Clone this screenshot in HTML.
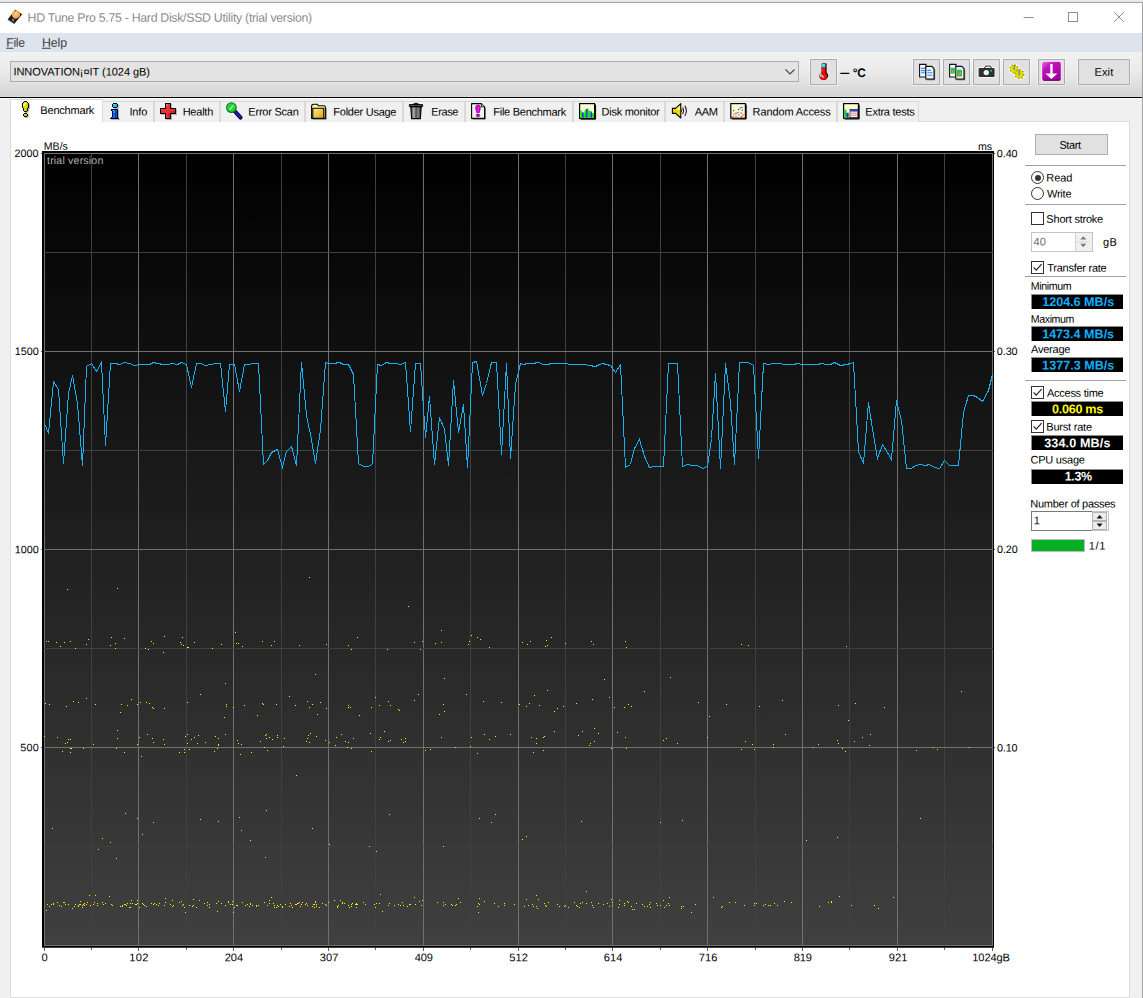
<!DOCTYPE html>
<html><head><meta charset="utf-8"><title>HD Tune Pro 5.75 - Hard Disk/SSD Utility (trial version)</title>
<style>
html,body{margin:0;padding:0}
body{width:1143px;height:998px;position:relative;overflow:hidden;background:#f0f0f0;font-family:"Liberation Sans",sans-serif;font-size:11px;color:#000}
.a{position:absolute}
.t{position:absolute;white-space:nowrap;line-height:14px;transform-origin:0 0}
#topstrip{left:0;top:0;width:1143px;height:2px;background:#e8e8e8}
#topline{left:0;top:2px;width:1143px;height:1px;background:#a6a6a6}
#rightline{left:1142px;top:2px;width:1px;height:996px;background:#a2a2a2}
#titlebar{left:0;top:3px;width:1142px;height:30px;background:#fff}
#title{left:28px;top:10px;font-size:12.3px;color:#8c8c8c;letter-spacing:0px}
#menubar{left:0;top:33px;width:1142px;height:19px;background:#dde4ed}
.menu{top:35px;font-size:12.3px;color:#3c3c3c}
.menu u{text-decoration:none;border-bottom:1px solid #3c3c3c;padding-bottom:0px}
#toolbar{left:0;top:52px;width:1142px;height:44px;background:linear-gradient(#f1f1f1 0%,#ececec 40%,#d5d5d5 100%)}
#tbline{left:0;top:96px;width:1142px;height:3px;background:linear-gradient(#dcdcdc 0,#dcdcdc 1px,#000 1px,#000 2px,#fff 2px,#fff 3px)}
#combo{left:10px;top:61px;width:787px;height:19px;background:#e3e3e3;border:1px solid #adadad;box-sizing:content-box}
#combo .t{left:4px;top:3px;font-size:11.4px}
.btn{position:absolute;background:#e1e1e1;border:1px solid #adadad;box-sizing:border-box;box-shadow:0 0 0 1px rgba(255,255,255,.45)}
.tab{position:absolute;top:101px;height:20.5px;box-sizing:border-box;border:1px solid #d9d9d9;border-bottom:none;background:#f0f0f0}
.tab .t{top:3px;font-size:11.4px}
.tab.sel{top:99px;height:23px;background:#fff;border-color:#d9d9d9}
#pane{left:10px;top:121px;width:1120px;height:876.5px;background:#fff;border:1px solid #dcdcdc;box-sizing:border-box}
.lbl{position:absolute;white-space:nowrap;font-size:11.4px;line-height:14px}
.ax{position:absolute;white-space:nowrap;font-size:10.6px;line-height:12px}
.vbox{position:absolute;left:1031px;width:92px;height:15px;background:#000;border-top:1px solid #8c8c8c;border-left:1px solid #8c8c8c;box-sizing:border-box}
.sep{position:absolute;left:1025px;width:101px;height:1px;background:#a0a0a0}
.cb{position:absolute;left:1031px;width:13px;height:13px;box-sizing:border-box;border:1px solid #333;background:#fff}
.rb{position:absolute;left:1031px;width:13px;height:13px;box-sizing:border-box;border:1px solid #333;border-radius:50%;background:#fff}

</style></head><body>
<div class="a" id="topstrip"></div><div class="a" id="topline"></div>
<div class="a" id="titlebar"></div>
<svg class="a" style="left:6px;top:8px" width="18" height="18" viewBox="0 0 18 18">
<path d="M9.2 1.8L16.2 6.2L8.6 15.4L1.8 11.2Z" fill="#1d1d1f"/>
<path d="M1.8 11.2L8.6 15.4L8.6 16.2L1.8 12Z" fill="#3a3a3a"/>
<ellipse cx="10" cy="6.6" rx="4.1" ry="3.7" fill="#f0a93a" transform="rotate(-35 10 6.6)"/>
<ellipse cx="10.2" cy="6.2" rx="2.6" ry="2.2" fill="#f7c56c" transform="rotate(-35 10 6.6)"/>
<circle cx="10" cy="6.4" r="1" fill="#c9c9d2"/>
<path d="M6.4 10.6L8.4 11.8L7.6 13.4L5.8 12.2Z" fill="#8a8a8a"/>
</svg>

<svg class="a" style="left:1015px;top:5px" width="125" height="26" viewBox="0 0 125 26">
<path d="M8.5 12.5H18.5" stroke="#8f8f8f" stroke-width="1"/>
<rect x="53.5" y="7.5" width="9" height="9" fill="none" stroke="#8f8f8f" stroke-width="1"/>
<path d="M99 7L109 17M109 7L99 17" stroke="#8f8f8f" stroke-width="1"/>
</svg>
<div class="a" id="menubar"></div>


<div class="a" id="toolbar"></div>
<div class="a" id="tbline"></div>
<div class="a" id="combo">
<svg class="a" style="left:773px;top:6px" width="12" height="8" viewBox="0 0 12 8"><path d="M1.5 1.5L6 6L10.5 1.5" fill="none" stroke="#444" stroke-width="1.1"/></svg></div>
<div class="btn" style="left:810px;top:59px;width:27px;height:26px"></div>

<div class="btn" style="left:913px;top:59px;width:27px;height:26px"></div>
<div class="btn" style="left:943px;top:59px;width:27px;height:26px"></div>
<div class="btn" style="left:973px;top:59px;width:27px;height:26px"></div>
<div class="btn" style="left:1003px;top:59px;width:27px;height:26px"></div>
<div class="btn" style="left:1038px;top:59px;width:27px;height:26px"></div>
<div class="btn" style="left:1078px;top:59px;width:52px;height:26px"></div>
<div class="a" id="rightline"></div>

<div class="a" id="pane"></div>
<div class="tab sel" style="left:10px;width:92.5px"></div>
<div class="tab" style="left:102px;width:52px"></div>
<div class="tab" style="left:153.5px;width:66.5px"></div>
<div class="tab" style="left:219.5px;width:85.5px"></div>
<div class="tab" style="left:304.5px;width:98.5px"></div>
<div class="tab" style="left:402.5px;width:62.5px"></div>
<div class="tab" style="left:464.5px;width:108.5px"></div>
<div class="tab" style="left:572.5px;width:92.5px"></div>
<div class="tab" style="left:664.5px;width:59.5px"></div>
<div class="tab" style="left:723.5px;width:113.5px"></div>
<div class="tab" style="left:836.5px;width:82.5px;border-right:1px solid #d9d9d9"></div>

<svg class="a" id="icons" style="left:0;top:0" width="1143" height="130" viewBox="0 0 1143 130">
<defs>
<linearGradient id="gmag" x1="0" y1="0" x2="0.6" y2="1"><stop offset="0" stop-color="#dc6cdc"/><stop offset="0.35" stop-color="#c010c0"/><stop offset="1" stop-color="#a000a0"/></linearGradient>
<linearGradient id="gfold" x1="0" y1="0" x2="1" y2="1"><stop offset="0" stop-color="#fff08a"/><stop offset="1" stop-color="#d8a010"/></linearGradient>
<linearGradient id="gtrash" x1="0" y1="0" x2="1" y2="0"><stop offset="0" stop-color="#2a2a2a"/><stop offset="0.3" stop-color="#b8b8b8"/><stop offset="0.5" stop-color="#4a4a4a"/><stop offset="0.7" stop-color="#8a8a8a"/><stop offset="1" stop-color="#1a1a1a"/></linearGradient>
<linearGradient id="gblue" x1="0" y1="0" x2="1" y2="0"><stop offset="0" stop-color="#3aa0ff"/><stop offset="1" stop-color="#0030d0"/></linearGradient>
</defs>
<!-- thermometer -->
<g>
<path d="M821.6 64.2Q821.6 63.2 822.6 63.2H825.4Q826.6 63.2 826.6 64.4V72.6A4.2 4.2 0 1 1 820.4 73.2L821.6 72Z" fill="#1a0000"/>
<rect x="821.7" y="63.7" width="3.6" height="4" fill="#3fe0e8"/>
<rect x="821.7" y="67.2" width="3.6" height="7" fill="#f01010"/>
<circle cx="823.2" cy="76.2" r="3.7" fill="#ee0a0a"/>
<path d="M819.4 73.4L821.4 72.2V76.4L819.8 76.8Z" fill="#7fdfe8"/>
<path d="M821.6 75.2Q822 77 823.8 77.2" stroke="#fff" stroke-width="1.1" fill="none"/>
</g>
<!-- copy text -->
<g stroke="#111" stroke-width="1.1">
<path d="M919.6 64.4H926V77H919.6Z" fill="#fff"/>
<path d="M925.8 66.4H931.8L934 68.6V79H925.8Z" fill="#f4f4f4"/>
<path d="M934.6 69.4V79.7H926.6" stroke="#333" stroke-width="1" fill="none"/>
</g>
<path d="M921 68.4H925M921 70.6H925M921 72.8H925M927.3 70.4H930.6M927.3 72.8H932.4M927.3 75.2H932.4" stroke="#1a8cff" stroke-width="1.1"/>
<!-- copy image -->
<g stroke="#111" stroke-width="1.1">
<path d="M949.6 64.4H956V77H949.6Z" fill="#fff"/>
<path d="M955.8 66.4H961.8L964 68.6V79H955.8Z" fill="#eee"/>
<path d="M964.6 69.4V79.7H956.6" stroke="#333" stroke-width="1" fill="none"/>
</g>
<rect x="950.6" y="68" width="4.8" height="5.6" fill="#22c040"/><rect x="950.6" y="67.6" width="4.8" height="1.2" fill="#38b8f0"/><rect x="952.4" y="70" width="2" height="2.4" fill="#e8c020"/><rect x="953" y="70.4" width="1" height="1" fill="#e02020"/>
<rect x="957" y="70" width="5" height="6.4" fill="#22c040"/><rect x="957" y="69.6" width="5" height="1.2" fill="#38b8f0"/><rect x="958.6" y="72" width="2.2" height="2.6" fill="#e8c020"/><rect x="959.2" y="72.4" width="1.1" height="1.1" fill="#e02020"/>
<!-- camera -->
<g>
<path d="M979.6 68H984L985.4 65.6H990.6L992 68H993.6Q994.6 68 994.6 69V76Q994.6 77 993.6 77H979.6Q978.6 77 978.6 76V69Q978.6 68 979.6 68Z" fill="#fff" stroke="#fff" stroke-width="1.6"/>
<path d="M979.6 68H984L985.4 65.6H990.6L992 68H993.6Q994.6 68 994.6 69V76Q994.6 77 993.6 77H979.6Q978.6 77 978.6 76V69Q978.6 68 979.6 68Z" fill="#303030"/>
<path d="M985.8 66.6H990.2L990.8 68H985.2Z" fill="#e8e8e8"/>
<circle cx="986.3" cy="72.6" r="2.7" fill="#f2f2f2"/>
<rect x="990.2" y="69.8" width="1.8" height="1.8" fill="#10d040"/>
</g>
<!-- gears -->
<g>
<circle cx="1014" cy="68.8" r="5.4" fill="#fff"/><circle cx="1019.4" cy="74.2" r="5.8" fill="#fff"/>
<circle cx="1014" cy="68.8" r="3.6" fill="#dede00" stroke="#a8a800" stroke-width="2.2" stroke-dasharray="1.6 1.2"/>
<circle cx="1014" cy="68.8" r="3.4" fill="#e2e200"/>
<circle cx="1019.4" cy="74.2" r="4" fill="#d6d600" stroke="#a0a000" stroke-width="2.2" stroke-dasharray="1.7 1.3"/>
<circle cx="1019.4" cy="74.2" r="3.8" fill="#dcdc00"/>
<path d="M1014.2 65V70" stroke="#8088a0" stroke-width="1.5"/><path d="M1019.2 70.4V75.4" stroke="#8088a0" stroke-width="1.5"/>
</g>
<!-- download -->
<g>
<rect x="1041.6" y="61.2" width="19.6" height="20" rx="2.2" fill="#fff"/>
<rect x="1042.2" y="61.8" width="18.6" height="19" rx="2" fill="url(#gmag)"/>
<path d="M1043 79.6H1060Q1060.6 79.6 1060.6 78.6V80Q1060 80.8 1059 80.8H1044Q1043 80.8 1043 79.6Z" fill="#700070"/>
<path d="M1050.3 64H1052.6V73.6H1057.4L1051.4 79L1045.4 73.6H1050.3Z" fill="#fff"/>
</g>
<!-- tab: benchmark ! -->
<g shape-rendering="crispEdges">
<path d="M24 101h3v1h1v1h1v5h-1v3h-1v1h-3v-1h-1v-3h-1v-5h1v-1h1z" fill="#000"/>
<path d="M24 102h3v1h1v5h-1v3h-3v-3h-1v-5h1z" fill="#dede00"/>
<path d="M24 103h2v1h-2zM23 104h2v2h-2z" fill="#ffff8a"/>
<path d="M27 104h1v4h-1zM26 108h1v3h-1z" fill="#c4c400"/>
<path d="M24 113h3v1h1v2h-1v1h-3v-1h-1v-2h1z" fill="#000"/>
<path d="M24 114h3v2h-3z" fill="#d0d000"/>
<path d="M29 104h1v5h-1v3h-1v1h-3v-1h2v-1h1v-3h1zM28 115h1v2h-1v1h-3v-1h2v-1h1z" fill="#000" opacity=".28"/>
</g>
<!-- tab: info -->
<g shape-rendering="crispEdges">
<path d="M114 104h4v1h1v3h-1v1h-4v-1h-1v-3h1zM112 110h7v9h1v1h-9v-1h1v-1h1v-6h-1z" fill="#000" opacity=".25"/>
<path d="M113 103h4v1h1v3h-1v1h-4v-1h-1v-3h1z" fill="#000"/>
<path d="M113 104h4v3h-4z" fill="#10c0f8"/><path d="M113 104h2v1h-2z" fill="#50e0ff"/>
<path d="M111 109H118V118H119V119H110V118H111V117H112V111H111Z" fill="#000"/>
<path d="M112 110h5v1h-5zM113 111h4v6h-4zM112 117h5v1h-5z" fill="#0868f8"/>
<path d="M115 111h2v7h-2z" fill="#0040e8"/><path d="M113 110h2v3h-2z" fill="#1890ff"/>
</g>
<!-- tab: health cross -->
<g shape-rendering="crispEdges">
<path d="M166 104h6v5h5v6h-5v5h-6v-5h-5v-6h5z" fill="#000" opacity=".25"/>
<path d="M165 103h6v5h5v6h-5v5h-6v-5h-5v-6h5z" fill="#000"/>
<path d="M166 104h4v5h5v4h-5v5h-4v-5h-5v-4h5z" fill="#e83232"/>
<path d="M166 104h2v2h-2zM161 109h2v1h-2z" fill="#ff6060"/>
<path d="M168 113h2v5h-2zM171 111h4v2h-4z" fill="#dc2020"/>
</g>
<!-- tab: error scan magnifier -->
<g>
<path d="M234.6 111L240.6 117.6" stroke="#000" stroke-width="4" stroke-linecap="round"/>
<path d="M234.6 111L240.4 117.4" stroke="#1818c8" stroke-width="2.4" stroke-linecap="round"/>
<circle cx="231.4" cy="107.6" r="4.8" fill="#20d838" stroke="#0a7a18" stroke-width="1.1"/>
<path d="M229.4 109.6L233.4 105.6" stroke="#c8ffd0" stroke-width="1.1"/>
</g>
<!-- tab: folder -->
<g>
<path d="M311.6 106.4Q311.6 104.2 313.4 104.2H317L318.6 105.8H324Q325.4 105.8 325.4 107.2V118.4H311.6Z" fill="#fff4a0" stroke="#000" stroke-width="1.1" stroke-linejoin="round"/>
<path d="M312.8 108.2H323.8V118.4H312.8Z" fill="url(#gfold)" stroke="#000" stroke-width="1.1" stroke-linejoin="round"/>
<path d="M326.2 108V119.2H312.6" stroke="#333" stroke-width=".9" fill="none" opacity=".7"/>
</g>
<!-- tab: trash -->
<g>
<path d="M410.8 106.6H421.2L420.4 118.6H411.6Z" fill="url(#gtrash)" stroke="#000" stroke-width="1.1" stroke-linejoin="round"/>
<path d="M409.4 104.6H422.6V106.6H409.4Z" fill="#555" stroke="#000" stroke-width="1" stroke-linejoin="round"/>
<path d="M414 103.4H418V104.6H414Z" fill="#222" stroke="#000" stroke-width=".8"/>
</g>
<!-- tab: file benchmark -->
<g>
<path d="M471.6 103.6H481.4L484.6 106.8V118.4H471.6Z" fill="#f2f2f2" stroke="#000" stroke-width="1.1" stroke-linejoin="round"/>
<path d="M481.4 103.6V106.8H484.6" fill="#ccc" stroke="#000" stroke-width=".9"/>
<path d="M485.4 107.6V119.2H472.6" stroke="#333" stroke-width=".9" fill="none" opacity=".7"/>
<path d="M478 105C480.2 105 480.6 107 480.2 108.8L479.3 112.6H476.7L475.8 108.8C475.4 107 475.8 105 478 105Z" fill="#e010e0" stroke="#600060" stroke-width=".7"/>
<ellipse cx="478" cy="115.4" rx="1.7" ry="1.3" fill="#e010e0" stroke="#600060" stroke-width=".7"/>
</g>
<!-- tab: disk monitor -->
<g>
<rect x="579.6" y="103.6" width="15" height="14.8" fill="#ffffd4" stroke="#000" stroke-width="1.2"/>
<path d="M580.2 117.8V110.4H582V112.6H584.6V109.8H586.4V108.6H588.6V110.8H590.6V113H594V117.8Z" fill="#18e018"/>
<path d="M582 117.8V112.4H583.6V117.8ZM586 117.8V109H587.4V117.8ZM590.6 117.8V111.4H592V117.8Z" fill="#2838e8"/>
<path d="M595.6 104.6V119.2H580.6" stroke="#000" stroke-width="1" fill="none"/>
</g>
<!-- tab: speaker -->
<g>
<path d="M672.4 108.4H675.6L680.8 103.6V118L675.6 113.4H672.4Z" fill="#e8d800" stroke="#000" stroke-width="1.1" stroke-linejoin="round"/>
<path d="M676 109L680 105.4V110.6Z" fill="#fff890" opacity=".8"/>
<path d="M682.6 107.6Q684.6 110.8 682.6 114M684.8 105.6Q688 110.8 684.8 116" stroke="#222" stroke-width="1.1" fill="none"/>
<path d="M681 110.8H682" stroke="#000" stroke-width="1.4"/>
</g>
<!-- tab: random access -->
<g>
<rect x="730.8" y="103.6" width="14.6" height="14.6" fill="#ffffd0" stroke="#000" stroke-width="1.2"/>
<path d="M746.2 104.6V119H731.8" stroke="#000" stroke-width="1" fill="none"/>
<g fill="#2030e0"><rect x="733" y="110" width="1.2" height="1.2"/><rect x="735.4" y="112.6" width="1.2" height="1.2"/><rect x="738" y="109" width="1.2" height="1.2"/><rect x="739.6" y="107.4" width="1.2" height="1.2"/><rect x="741.4" y="106.8" width="1.2" height="1.2"/><rect x="741.6" y="109.4" width="1.2" height="1.2"/><rect x="737.4" y="112.2" width="1.2" height="1.2"/></g>
<g fill="#e82020"><rect x="732.4" y="116" width="1.2" height="1.2"/><rect x="733.4" y="113.6" width="1.2" height="1.2"/><rect x="735.4" y="115.4" width="1.2" height="1.2"/><rect x="738.4" y="114.4" width="1.2" height="1.2"/><rect x="740.6" y="112.4" width="1.2" height="1.2"/><rect x="742.4" y="114.4" width="1.2" height="1.2"/><rect x="741" y="116" width="1.2" height="1.2"/></g>
</g>
<!-- tab: extra tests -->
<g>
<rect x="843.6" y="103.6" width="14.8" height="14.6" fill="#ffffd0" stroke="#000" stroke-width="1.2"/>
<path d="M859.2 104.6V119H844.6" stroke="#000" stroke-width="1" fill="none"/>
<path d="M844.2 117.6V109.6H846.4V112.4H848.4V117.6Z" fill="#18d818"/><path d="M846.4 117.6V113H848.6V117.6Z" fill="#2838e8"/>
<rect x="850" y="109.4" width="7.8" height="8.2" fill="#fff" stroke="#222" stroke-width=".8"/>
<rect x="850.4" y="109.8" width="7" height="1.8" fill="#2840d8"/>
<g fill="#e02020"><rect x="851.4" y="112.6" width="1.1" height="1.1"/><rect x="853.4" y="112.6" width="1.1" height="1.1"/><rect x="855.4" y="112.6" width="1.1" height="1.1"/><rect x="851.4" y="114.6" width="1.1" height="1.1"/><rect x="853.4" y="114.6" width="1.1" height="1.1"/><rect x="855.4" y="114.6" width="1.1" height="1.1"/></g>
</g>
</svg>

<svg id="chart" width="1143" height="998" viewBox="0 0 1143 998" style="position:absolute;left:0;top:0"><defs><linearGradient id="bg" x1="0" y1="0" x2="0" y2="1"><stop offset="0" stop-color="#000"/><stop offset="1" stop-color="#404040"/></linearGradient></defs><rect x="42" y="151" width="952" height="796.5" fill="#000"/><rect x="44" y="153" width="949" height="793" fill="url(#bg)"/><g shape-rendering="crispEdges" fill="none" stroke-width="1"><path d="M91.5 153V946M186.5 153V946M281.5 153V946M375.5 153V946M470.5 153V946M565.5 153V946M660.5 153V946M755.5 153V946M849.5 153V946M944.5 153V946" stroke="#404040"/><path d="M44.5 153V946M138.5 153V946M233.5 153V946M328.5 153V946M423.5 153V946M518.5 153V946M612.5 153V946M707.5 153V946M802.5 153V946M897.5 153V946M992.5 153V946" stroke="#707070"/><path d="M44 252.5H993M44 450.5H993M44 648.5H993M44 846.5H993" stroke="#404040"/><path d="M44 153.5H993M44 351.5H993M44 549.5H993M44 747.5H993M44 945.5H993" stroke="#707070"/><path d="M44.5 947V951M91.5 947V949.5M138.5 947V951M186.5 947V949.5M233.5 947V951M281.5 947V949.5M328.5 947V951M375.5 947V949.5M423.5 947V951M470.5 947V949.5M518.5 947V951M565.5 947V949.5M612.5 947V951M660.5 947V949.5M707.5 947V951M755.5 947V949.5M802.5 947V951M849.5 947V949.5M897.5 947V951M944.5 947V949.5M992.5 947V951M41 153.5H42M994 153.5H995M41 351.5H42M994 351.5H995M41 549.5H42M994 549.5H995M41 747.5H42M994 747.5H995" stroke="#606060"/></g><rect x="42" y="946" width="952" height="1.5" fill="#000"/><path d="M67 589h1v1h-1zM117 588h1v1h-1zM46 641h1v1h-1zM48 641h1v1h-1zM56 642h1v1h-1zM60 646h1v1h-1zM64 642h1v1h-1zM70 641h1v1h-1zM75 648h1v1h-1zM86 644h1v1h-1zM88 639h1v1h-1zM110 645h1v1h-1zM111 637h1v1h-1zM115 643h1v1h-1zM115 648h1v1h-1zM124 638h1v1h-1zM145 648h1v1h-1zM148 649h1v1h-1zM151 641h1v1h-1zM153 643h1v1h-1zM163 652h1v1h-1zM164 636h1v1h-1zM180 642h1v1h-1zM181 644h1v1h-1zM182 637h1v1h-1zM183 645h1v1h-1zM187 647h1v1h-1zM188 647h1v1h-1zM194 642h1v1h-1zM212 648h1v1h-1zM221 644h1v1h-1zM235 632h1v1h-1zM236 643h1v1h-1zM238 643h1v1h-1zM242 646h1v1h-1zM262 641h1v1h-1zM271 645h1v1h-1zM274 641h1v1h-1zM225 683h1v1h-1zM200 694h1v1h-1zM86 698h1v1h-1zM131 699h1v1h-1zM45 703h1v1h-1zM49 704h1v1h-1zM66 706h1v1h-1zM73 701h1v1h-1zM78 702h1v1h-1zM95 704h1v1h-1zM121 704h1v1h-1zM127 705h1v1h-1zM137 704h1v1h-1zM140 702h1v1h-1zM146 702h1v1h-1zM149 703h1v1h-1zM152 707h1v1h-1zM153 708h1v1h-1zM164 708h1v1h-1zM120 712h1v1h-1zM187 702h1v1h-1zM226 704h1v1h-1zM226 706h1v1h-1zM233 707h1v1h-1zM244 705h1v1h-1zM262 703h1v1h-1zM263 704h1v1h-1zM276 704h1v1h-1zM224 717h1v1h-1zM257 715h1v1h-1zM44 736h1v1h-1zM57 737h1v1h-1zM68 739h1v1h-1zM70 739h1v1h-1zM67 742h1v1h-1zM65 743h1v1h-1zM62 751h1v1h-1zM70 748h1v1h-1zM71 748h1v1h-1zM70 752h1v1h-1zM83 748h1v1h-1zM93 744h1v1h-1zM117 730h1v1h-1zM117 738h1v1h-1zM116 748h1v1h-1zM124 752h1v1h-1zM137 744h1v1h-1zM139 737h1v1h-1zM141 756h1v1h-1zM147 734h1v1h-1zM152 738h1v1h-1zM153 742h1v1h-1zM163 739h1v1h-1zM164 744h1v1h-1zM179 752h1v1h-1zM184 749h1v1h-1zM184 752h1v1h-1zM185 736h1v1h-1zM187 734h1v1h-1zM187 743h1v1h-1zM189 749h1v1h-1zM191 739h1v1h-1zM194 737h1v1h-1zM197 743h1v1h-1zM198 735h1v1h-1zM205 742h1v1h-1zM214 751h1v1h-1zM215 736h1v1h-1zM217 748h1v1h-1zM218 738h1v1h-1zM218 744h1v1h-1zM218 745h1v1h-1zM225 734h1v1h-1zM237 740h1v1h-1zM238 743h1v1h-1zM241 744h1v1h-1zM240 754h1v1h-1zM251 752h1v1h-1zM260 741h1v1h-1zM264 747h1v1h-1zM265 735h1v1h-1zM266 734h1v1h-1zM266 738h1v1h-1zM267 750h1v1h-1zM269 737h1v1h-1zM272 739h1v1h-1zM277 735h1v1h-1zM277 737h1v1h-1zM309 577h1v1h-1zM408 606h1v1h-1zM441 630h1v1h-1zM357 637h1v1h-1zM471 635h1v1h-1zM477 637h1v1h-1zM480 639h1v1h-1zM469 641h1v1h-1zM468 644h1v1h-1zM299 645h1v1h-1zM326 644h1v1h-1zM348 645h1v1h-1zM351 649h1v1h-1zM387 649h1v1h-1zM414 642h1v1h-1zM422 641h1v1h-1zM420 649h1v1h-1zM435 643h1v1h-1zM441 642h1v1h-1zM489 647h1v1h-1zM315 674h1v1h-1zM444 678h1v1h-1zM289 696h1v1h-1zM418 694h1v1h-1zM466 694h1v1h-1zM375 697h1v1h-1zM414 700h1v1h-1zM307 701h1v1h-1zM320 702h1v1h-1zM312 704h1v1h-1zM295 705h1v1h-1zM309 707h1v1h-1zM326 708h1v1h-1zM348 705h1v1h-1zM348 707h1v1h-1zM350 707h1v1h-1zM371 707h1v1h-1zM379 705h1v1h-1zM388 701h1v1h-1zM390 705h1v1h-1zM398 709h1v1h-1zM399 710h1v1h-1zM317 714h1v1h-1zM359 715h1v1h-1zM443 704h1v1h-1zM444 711h1v1h-1zM439 714h1v1h-1zM483 701h1v1h-1zM501 702h1v1h-1zM519 704h1v1h-1zM284 738h1v1h-1zM283 746h1v1h-1zM310 733h1v1h-1zM308 735h1v1h-1zM307 738h1v1h-1zM306 741h1v1h-1zM309 742h1v1h-1zM316 736h1v1h-1zM325 740h1v1h-1zM329 742h1v1h-1zM336 737h1v1h-1zM335 745h1v1h-1zM341 734h1v1h-1zM345 741h1v1h-1zM348 742h1v1h-1zM347 747h1v1h-1zM351 748h1v1h-1zM353 738h1v1h-1zM370 733h1v1h-1zM371 751h1v1h-1zM379 739h1v1h-1zM380 737h1v1h-1zM384 731h1v1h-1zM388 741h1v1h-1zM390 740h1v1h-1zM401 739h1v1h-1zM403 742h1v1h-1zM405 738h1v1h-1zM405 741h1v1h-1zM425 750h1v1h-1zM430 749h1v1h-1zM441 737h1v1h-1zM455 747h1v1h-1zM470 746h1v1h-1zM471 737h1v1h-1zM477 753h1v1h-1zM484 734h1v1h-1zM489 739h1v1h-1zM495 736h1v1h-1zM510 734h1v1h-1zM522 642h1v1h-1zM527 644h1v1h-1zM530 641h1v1h-1zM546 640h1v1h-1zM551 637h1v1h-1zM545 646h1v1h-1zM547 645h1v1h-1zM565 643h1v1h-1zM591 641h1v1h-1zM593 644h1v1h-1zM625 641h1v1h-1zM626 647h1v1h-1zM741 644h1v1h-1zM748 645h1v1h-1zM604 679h1v1h-1zM670 677h1v1h-1zM547 690h1v1h-1zM644 691h1v1h-1zM534 695h1v1h-1zM609 697h1v1h-1zM592 699h1v1h-1zM529 703h1v1h-1zM526 706h1v1h-1zM539 705h1v1h-1zM576 703h1v1h-1zM563 706h1v1h-1zM557 708h1v1h-1zM554 711h1v1h-1zM614 707h1v1h-1zM624 707h1v1h-1zM628 704h1v1h-1zM631 706h1v1h-1zM698 702h1v1h-1zM726 704h1v1h-1zM759 706h1v1h-1zM709 716h1v1h-1zM554 731h1v1h-1zM531 737h1v1h-1zM536 738h1v1h-1zM543 737h1v1h-1zM544 736h1v1h-1zM536 743h1v1h-1zM533 752h1v1h-1zM543 750h1v1h-1zM578 735h1v1h-1zM582 731h1v1h-1zM594 728h1v1h-1zM598 733h1v1h-1zM594 741h1v1h-1zM590 743h1v1h-1zM589 745h1v1h-1zM611 748h1v1h-1zM617 732h1v1h-1zM625 737h1v1h-1zM626 748h1v1h-1zM663 740h1v1h-1zM666 738h1v1h-1zM677 743h1v1h-1zM707 737h1v1h-1zM745 741h1v1h-1zM752 744h1v1h-1zM741 749h1v1h-1zM754 749h1v1h-1zM846 646h1v1h-1zM961 691h1v1h-1zM782 700h1v1h-1zM838 705h1v1h-1zM855 703h1v1h-1zM884 707h1v1h-1zM848 720h1v1h-1zM785 734h1v1h-1zM773 744h1v1h-1zM773 747h1v1h-1zM813 747h1v1h-1zM818 744h1v1h-1zM837 740h1v1h-1zM838 743h1v1h-1zM842 748h1v1h-1zM845 751h1v1h-1zM854 741h1v1h-1zM862 737h1v1h-1zM870 734h1v1h-1zM869 745h1v1h-1zM916 750h1v1h-1zM933 747h1v1h-1zM937 749h1v1h-1zM969 747h1v1h-1zM52 828h1v1h-1zM125 813h1v1h-1zM137 818h1v1h-1zM153 822h1v1h-1zM142 834h1v1h-1zM102 838h1v1h-1zM110 842h1v1h-1zM98 849h1v1h-1zM116 858h1v1h-1zM200 819h1v1h-1zM218 821h1v1h-1zM239 817h1v1h-1zM241 830h1v1h-1zM250 840h1v1h-1zM266 810h1v1h-1zM265 857h1v1h-1zM89 895h1v1h-1zM95 895h1v1h-1zM109 896h1v1h-1zM165 898h1v1h-1zM172 900h1v1h-1zM193 899h1v1h-1zM271 897h1v1h-1zM46 910h1v1h-1zM185 912h1v1h-1zM217 911h1v1h-1zM233 912h1v1h-1zM296 775h1v1h-1zM312 828h1v1h-1zM329 844h1v1h-1zM369 846h1v1h-1zM376 851h1v1h-1zM389 814h1v1h-1zM443 846h1v1h-1zM479 818h1v1h-1zM491 822h1v1h-1zM495 814h1v1h-1zM380 894h1v1h-1zM414 897h1v1h-1zM419 901h1v1h-1zM458 898h1v1h-1zM479 898h1v1h-1zM382 911h1v1h-1zM478 912h1v1h-1zM522 839h1v1h-1zM526 836h1v1h-1zM581 821h1v1h-1zM660 822h1v1h-1zM682 820h1v1h-1zM536 895h1v1h-1zM526 899h1v1h-1zM538 899h1v1h-1zM586 891h1v1h-1zM611 899h1v1h-1zM669 897h1v1h-1zM713 897h1v1h-1zM691 912h1v1h-1zM632 909h1v1h-1zM634 909h1v1h-1zM524 906h1v1h-1zM528 905h1v1h-1zM532 904h1v1h-1zM533 906h1v1h-1zM536 906h1v1h-1zM537 908h1v1h-1zM544 903h1v1h-1zM545 905h1v1h-1zM546 906h1v1h-1zM548 902h1v1h-1zM557 904h1v1h-1zM559 906h1v1h-1zM564 906h1v1h-1zM565 905h1v1h-1zM568 907h1v1h-1zM574 902h1v1h-1zM576 905h1v1h-1zM577 906h1v1h-1zM579 907h1v1h-1zM580 903h1v1h-1zM582 902h1v1h-1zM586 903h1v1h-1zM591 902h1v1h-1zM592 905h1v1h-1zM593 907h1v1h-1zM598 903h1v1h-1zM603 904h1v1h-1zM607 903h1v1h-1zM609 906h1v1h-1zM612 902h1v1h-1zM612 905h1v1h-1zM618 907h1v1h-1zM619 900h1v1h-1zM619 904h1v1h-1zM624 903h1v1h-1zM624 905h1v1h-1zM627 901h1v1h-1zM628 902h1v1h-1zM631 906h1v1h-1zM636 903h1v1h-1zM642 904h1v1h-1zM644 906h1v1h-1zM647 906h1v1h-1zM649 904h1v1h-1zM650 902h1v1h-1zM650 907h1v1h-1zM656 903h1v1h-1zM657 905h1v1h-1zM660 905h1v1h-1zM663 900h1v1h-1zM664 907h1v1h-1zM666 905h1v1h-1zM668 903h1v1h-1zM669 905h1v1h-1zM681 906h1v1h-1zM683 906h1v1h-1zM681 908h1v1h-1zM695 904h1v1h-1zM721 907h1v1h-1zM722 906h1v1h-1zM729 902h1v1h-1zM735 902h1v1h-1zM744 905h1v1h-1zM754 903h1v1h-1zM754 905h1v1h-1zM756 903h1v1h-1zM920 818h1v1h-1zM806 840h1v1h-1zM837 837h1v1h-1zM763 905h1v1h-1zM765 904h1v1h-1zM768 905h1v1h-1zM770 905h1v1h-1zM774 903h1v1h-1zM777 905h1v1h-1zM784 901h1v1h-1zM791 902h1v1h-1zM819 906h1v1h-1zM828 902h1v1h-1zM831 901h1v1h-1zM831 902h1v1h-1zM839 896h1v1h-1zM851 905h1v1h-1zM874 905h1v1h-1zM878 908h1v1h-1zM893 897h1v1h-1zM120 906h1v1h-1zM61 906h1v1h-1zM170 904h1v1h-1zM164 905h1v1h-1zM53 904h1v1h-1zM65 904h1v1h-1zM144 905h1v1h-1zM97 903h1v1h-1zM192 906h1v1h-1zM137 903h1v1h-1zM274 907h1v1h-1zM112 905h1v1h-1zM78 905h1v1h-1zM236 905h1v1h-1zM87 902h1v1h-1zM132 903h1v1h-1zM173 905h1v1h-1zM93 904h1v1h-1zM204 903h1v1h-1zM182 905h1v1h-1zM151 903h1v1h-1zM209 907h1v1h-1zM102 902h1v1h-1zM250 903h1v1h-1zM216 903h1v1h-1zM72 908h1v1h-1zM143 904h1v1h-1zM159 903h1v1h-1zM53 903h1v1h-1zM179 902h1v1h-1zM250 903h1v1h-1zM184 907h1v1h-1zM181 901h1v1h-1zM267 905h1v1h-1zM156 904h1v1h-1zM209 904h1v1h-1zM196 907h1v1h-1zM111 904h1v1h-1zM135 904h1v1h-1zM153 904h1v1h-1zM84 905h1v1h-1zM225 905h1v1h-1zM75 904h1v1h-1zM249 906h1v1h-1zM63 902h1v1h-1zM252 905h1v1h-1zM237 905h1v1h-1zM142 903h1v1h-1zM129 907h1v1h-1zM80 901h1v1h-1zM86 904h1v1h-1zM158 905h1v1h-1zM183 904h1v1h-1zM143 904h1v1h-1zM131 900h1v1h-1zM207 902h1v1h-1zM165 902h1v1h-1zM57 902h1v1h-1zM256 905h1v1h-1zM232 901h1v1h-1zM136 904h1v1h-1zM193 905h1v1h-1zM59 905h1v1h-1zM82 905h1v1h-1zM124 904h1v1h-1zM80 904h1v1h-1zM68 904h1v1h-1zM250 904h1v1h-1zM189 905h1v1h-1zM126 905h1v1h-1zM130 907h1v1h-1zM278 906h1v1h-1zM154 903h1v1h-1zM68 904h1v1h-1zM125 904h1v1h-1zM82 907h1v1h-1zM49 906h1v1h-1zM79 904h1v1h-1zM172 906h1v1h-1zM274 905h1v1h-1zM247 904h1v1h-1zM130 903h1v1h-1zM83 904h1v1h-1zM228 902h1v1h-1zM122 905h1v1h-1zM276 907h1v1h-1zM245 905h1v1h-1zM218 901h1v1h-1zM97 903h1v1h-1zM51 904h1v1h-1zM51 904h1v1h-1zM207 905h1v1h-1zM269 900h1v1h-1zM277 905h1v1h-1zM269 903h1v1h-1zM97 905h1v1h-1zM90 905h1v1h-1zM256 906h1v1h-1zM242 902h1v1h-1zM232 904h1v1h-1zM64 902h1v1h-1zM228 901h1v1h-1zM221 903h1v1h-1zM230 904h1v1h-1zM122 906h1v1h-1zM137 900h1v1h-1zM139 907h1v1h-1zM84 903h1v1h-1zM74 906h1v1h-1zM234 907h1v1h-1zM78 906h1v1h-1zM199 900h1v1h-1zM127 903h1v1h-1zM47 904h1v1h-1zM273 903h1v1h-1zM264 902h1v1h-1zM146 906h1v1h-1zM94 902h1v1h-1zM103 904h1v1h-1zM182 905h1v1h-1zM105 903h1v1h-1zM258 905h1v1h-1zM328 902h1v1h-1zM403 905h1v1h-1zM337 906h1v1h-1zM352 903h1v1h-1zM351 906h1v1h-1zM305 904h1v1h-1zM280 904h1v1h-1zM344 903h1v1h-1zM379 903h1v1h-1zM351 904h1v1h-1zM356 904h1v1h-1zM356 903h1v1h-1zM314 904h1v1h-1zM349 907h1v1h-1zM357 904h1v1h-1zM340 900h1v1h-1zM363 902h1v1h-1zM374 904h1v1h-1zM342 902h1v1h-1zM409 904h1v1h-1zM375 907h1v1h-1zM315 901h1v1h-1zM356 907h1v1h-1zM298 903h1v1h-1zM296 904h1v1h-1zM313 904h1v1h-1zM290 903h1v1h-1zM402 902h1v1h-1zM301 904h1v1h-1zM299 902h1v1h-1zM400 905h1v1h-1zM410 904h1v1h-1zM334 900h1v1h-1zM394 905h1v1h-1zM302 902h1v1h-1zM326 905h1v1h-1zM306 903h1v1h-1zM282 907h1v1h-1zM355 904h1v1h-1zM325 904h1v1h-1zM365 904h1v1h-1zM415 904h1v1h-1zM388 905h1v1h-1zM316 904h1v1h-1zM285 904h1v1h-1zM297 903h1v1h-1zM337 907h1v1h-1zM315 902h1v1h-1zM300 906h1v1h-1zM376 903h1v1h-1zM292 907h1v1h-1zM338 905h1v1h-1zM289 906h1v1h-1zM389 903h1v1h-1zM291 905h1v1h-1zM398 904h1v1h-1zM342 903h1v1h-1zM407 906h1v1h-1zM316 906h1v1h-1zM312 906h1v1h-1zM295 904h1v1h-1zM307 905h1v1h-1zM322 903h1v1h-1zM319 907h1v1h-1zM348 905h1v1h-1zM282 906h1v1h-1zM314 907h1v1h-1zM355 904h1v1h-1zM422 900h1v1h-1zM421 905h1v1h-1zM443 902h1v1h-1zM443 905h1v1h-1zM437 902h1v1h-1zM445 904h1v1h-1zM455 905h1v1h-1zM460 902h1v1h-1zM456 904h1v1h-1zM452 905h1v1h-1zM451 904h1v1h-1zM478 903h1v1h-1zM477 906h1v1h-1zM484 901h1v1h-1zM479 904h1v1h-1zM498 906h1v1h-1zM494 903h1v1h-1zM504 905h1v1h-1zM504 903h1v1h-1zM514 904h1v1h-1z" fill="#f6f200" shape-rendering="crispEdges"/><path d="M44.5 423.5L48.5 433.5L53.5 381.5L58.5 389.5L63.5 463.5L68.5 393.5L72.5 375.5L77.5 403.5L82.5 465.5L86.5 366.5L91.5 363.5L96.5 371.5L101.5 362.5L105.5 445.5L110.5 363.5L115.5 363.5L119.5 364.5L124.5 362.5L129.5 363.5L134.5 365.5L139.5 364.5L144.5 364.5L149.5 364.5L153.5 362.5L157.5 363.5L163.5 364.5L167.5 364.5L172.5 363.5L177.5 364.5L181.5 362.5L186.5 364.5L191.5 387.5L196.5 363.5L200.5 363.5L205.5 365.5L210.5 364.5L215.5 363.5L220.5 363.5L225.5 411.5L229.5 364.5L234.5 364.5L239.5 391.5L244.5 364.5L248.5 364.5L253.5 363.5L258.5 363.5L263.5 464.5L267.5 460.5L271.5 452.5L277.5 449.5L282.5 467.5L286.5 451.5L291.5 446.5L296.5 465.5L301.5 362.5L306.5 415.5L311.5 439.5L315.5 463.5L320.5 429.5L325.5 362.5L328.5 363.5L333.5 363.5L339.5 362.5L343.5 364.5L348.5 364.5L353.5 374.5L358.5 463.5L363.5 466.5L367.5 466.5L372.5 464.5L377.5 364.5L381.5 365.5L386.5 362.5L390.5 363.5L395.5 363.5L400.5 364.5L405.5 362.5L410.5 431.5L415.5 363.5L420.5 363.5L425.5 437.5L429.5 396.5L434.5 464.5L439.5 417.5L444.5 429.5L448.5 465.5L453.5 380.5L458.5 432.5L463.5 404.5L467.5 467.5L472.5 362.5L476.5 361.5L482.5 395.5L486.5 383.5L491.5 362.5L496.5 362.5L501.5 454.5L506.5 363.5L510.5 458.5L515.5 384.5L520.5 363.5L523.5 364.5L527.5 363.5L532.5 363.5L538.5 362.5L543.5 364.5L547.5 364.5L551.5 363.5L556.5 363.5L561.5 363.5L565.5 363.5L570.5 364.5L575.5 364.5L580.5 364.5L584.5 364.5L589.5 365.5L595.5 366.5L599.5 364.5L602.5 363.5L606.5 364.5L610.5 365.5L615.5 372.5L620.5 364.5L625.5 467.5L630.5 464.5L634.5 448.5L639.5 439.5L644.5 456.5L649.5 467.5L654.5 466.5L659.5 466.5L663.5 466.5L668.5 363.5L673.5 363.5L677.5 363.5L682.5 466.5L687.5 464.5L692.5 465.5L697.5 465.5L702.5 468.5L707.5 466.5L711.5 438.5L715.5 373.5L720.5 468.5L725.5 363.5L730.5 402.5L734.5 464.5L739.5 362.5L744.5 362.5L748.5 362.5L753.5 365.5L758.5 458.5L763.5 363.5L768.5 364.5L773.5 363.5L779.5 363.5L784.5 364.5L788.5 364.5L793.5 364.5L797.5 363.5L802.5 364.5L807.5 364.5L812.5 364.5L817.5 364.5L821.5 363.5L826.5 364.5L830.5 364.5L834.5 362.5L840.5 365.5L846.5 364.5L850.5 363.5L853.5 362.5L858.5 451.5L863.5 463.5L868.5 402.5L872.5 429.5L877.5 458.5L882.5 444.5L887.5 452.5L891.5 459.5L896.5 400.5L901.5 420.5L906.5 468.5L911.5 468.5L915.5 465.5L920.5 464.5L925.5 465.5L929.5 464.5L934.5 467.5L939.5 468.5L944.5 460.5L949.5 465.5L954.5 465.5L958.5 465.5L963.5 412.5L968.5 395.5L973.5 395.5L977.5 397.5L982.5 401.5L988.5 390.5L992.5 374.5" stroke="#18b0f0" stroke-width="1" fill="none" shape-rendering="crispEdges"/></svg>

<div class="btn" style="left:1035px;top:134px;width:73px;height:21px"></div>
<div class="sep" style="top:165px"></div>
<div class="rb" style="top:171px"><div class="a" style="left:2.5px;top:2.5px;width:6px;height:6px;border-radius:50%;background:#333"></div></div>
<div class="rb" style="top:187px"></div>
<div class="sep" style="top:204px"></div>
<div class="cb" style="top:212px"></div>
<div class="a" style="left:1031px;top:232px;width:62px;height:20px;box-sizing:border-box;border:1px solid #c4c4c4;background:#fff"></div>
<div class="a" style="left:1075px;top:233px;width:17px;height:18px;background:#f0f0f0;border-left:1px solid #d0d0d0;box-sizing:border-box"></div>
<svg class="a" style="left:1075px;top:233px" width="16" height="18" viewBox="0 0 16 18"><path d="M5.3 6.6L8.3 3.2L11.3 6.6Z M5.3 10.8L8.3 14.2L11.3 10.8Z" fill="#7a7a7a"/><path d="M1 9H15" stroke="#dadada" stroke-width="1"/></svg>
<div class="cb" style="top:261px"></div>
<svg class="a" style="left:1031px;top:261px" width="13" height="13" viewBox="0 0 13 13"><path d="M2.6 6.4L5.2 9.2L10.6 3.2" fill="none" stroke="#222" stroke-width="1.2"/></svg>
<div class="sep" style="top:276px"></div>
<div class="vbox" style="top:294px"></div>
<div class="vbox" style="top:326px"></div>
<div class="vbox" style="top:357px"></div>
<div class="sep" style="top:380px"></div>
<div class="cb" style="top:386px"></div>
<svg class="a" style="left:1031px;top:386px" width="13" height="13" viewBox="0 0 13 13"><path d="M2.6 6.4L5.2 9.2L10.6 3.2" fill="none" stroke="#222" stroke-width="1.2"/></svg>
<div class="vbox" style="top:401px"></div>
<div class="cb" style="top:420px"></div>
<svg class="a" style="left:1031px;top:420px" width="13" height="13" viewBox="0 0 13 13"><path d="M2.6 6.4L5.2 9.2L10.6 3.2" fill="none" stroke="#222" stroke-width="1.2"/></svg>
<div class="vbox" style="top:435px"></div>
<div class="vbox" style="top:469px"></div>
<div class="a" style="left:1031px;top:511px;width:78px;height:20px;box-sizing:border-box;border:1px solid #c4c4c4;background:#fff"></div><div class="a" style="left:1031px;top:511px;width:61px;height:20px;box-sizing:border-box;border:1px solid #7a7a7a;border-right:none;background:#fff"></div>
<div class="a" style="left:1092px;top:512px;width:15px;height:8.5px;background:#ececec;border:1px solid #b4b4b4;box-sizing:border-box"></div><div class="a" style="left:1092px;top:521px;width:15px;height:9px;background:#ececec;border:1px solid #b4b4b4;box-sizing:border-box"></div>
<svg class="a" style="left:1092px;top:512px" width="16" height="18" viewBox="0 0 16 18"><path d="M4.6 6.4L7.6 3L10.6 6.4Z M4.6 11.6L7.6 15L10.6 11.6Z" fill="#111"/></svg>
<div class="a" style="left:1031px;top:539px;width:54px;height:13px;box-sizing:border-box;border:1px solid #bcbcbc;background:#06b025"></div>
<div class="t" id="title" style="left:27px;top:10px;font-size:12.3px;letter-spacing:-0.280px;transform:translate(0.62px,0.72px) rotate(0.03deg);color:#8c8c8c">HD Tune Pro 5.75 - Hard Disk/SSD Utility (trial version)</div>
<div class="t" id="mfile" style="left:6px;top:35px;font-size:12.3px;letter-spacing:-0.380px;transform:translate(0.35px,0.64px) rotate(0.03deg) scaleX(0.9957);color:#3c3c3c"><u>F</u>ile</div>
<div class="t" id="mhelp" style="left:41px;top:35px;font-size:12.3px;letter-spacing:-0.044px;transform:translate(0.92px,0.71px) rotate(0.03deg);color:#3c3c3c"><u>H</u>elp</div>
<div class="t" id="combotx" style="left:13px;top:64px;font-size:11px;letter-spacing:-0.041px;transform:translate(0.44px,0.37px) rotate(0.03deg);">INNOVATION¡¤IT (1024 gB)</div>
<div class="t" id="dash" style="left:839px;top:65px;font-size:12.5px;letter-spacing:0.000px;transform:translate(0.68px,0.69px) rotate(0.03deg) scaleX(1.4353);font-weight:bold">–</div>
<div class="t" id="degc" style="left:852px;top:65px;font-size:12.4px;letter-spacing:-0.380px;transform:translate(0.87px,0.96px) rotate(0.03deg) scaleX(0.9571);font-weight:bold">°C</div>
<div class="t" id="exit" style="left:1094px;top:64px;font-size:11px;letter-spacing:0.116px;transform:translate(0.54px,0.70px) rotate(0.03deg);">Exit</div>
<div class="t" id="tb0" style="left:40px;top:102px;font-size:11px;letter-spacing:-0.203px;transform:translate(0.34px,0.95px) rotate(0.03deg);">Benchmark</div>
<div class="t" id="tb1" style="left:129px;top:104px;font-size:11px;letter-spacing:-0.151px;transform:translate(0.44px,0.56px) rotate(0.03deg);">Info</div>
<div class="t" id="tb2" style="left:182px;top:104px;font-size:11px;letter-spacing:-0.230px;transform:translate(0.65px,0.57px) rotate(0.03deg);">Health</div>
<div class="t" id="tb3" style="left:248px;top:104px;font-size:11px;letter-spacing:-0.228px;transform:translate(0.34px,0.53px) rotate(0.03deg);">Error Scan</div>
<div class="t" id="tb4" style="left:333px;top:104px;font-size:11px;letter-spacing:-0.261px;transform:translate(0.32px,0.61px) rotate(0.03deg);">Folder Usage</div>
<div class="t" id="tb5" style="left:431px;top:104px;font-size:11px;letter-spacing:-0.380px;transform:translate(0.37px,0.56px) rotate(0.03deg) scaleX(0.9939);">Erase</div>
<div class="t" id="tb6" style="left:493px;top:104px;font-size:11px;letter-spacing:-0.265px;transform:translate(0.27px,0.61px) rotate(0.03deg);">File Benchmark</div>
<div class="t" id="tb7" style="left:601px;top:104px;font-size:11px;letter-spacing:-0.271px;transform:translate(0.63px,0.44px) rotate(0.03deg);">Disk monitor</div>
<div class="t" id="tb8" style="left:694px;top:104px;font-size:11px;letter-spacing:-0.380px;transform:translate(0.79px,0.43px) rotate(0.03deg) scaleX(1.0085);">AAM</div>
<div class="t" id="tb9" style="left:752px;top:104px;font-size:11px;letter-spacing:-0.110px;transform:translate(0.58px,0.57px) rotate(0.03deg);">Random Access</div>
<div class="t" id="tb10" style="left:865px;top:104px;font-size:11px;letter-spacing:-0.259px;transform:translate(0.33px,0.53px) rotate(0.03deg);">Extra tests</div>
<div class="t" id="mbs" style="left:43px;top:138px;font-size:10.6px;letter-spacing:0.014px;transform:translate(0.72px,0.83px) rotate(0.03deg);">MB/s</div>
<div class="t" id="trial" style="left:47px;top:152px;font-size:10.6px;letter-spacing:0.178px;transform:translate(0.02px,0.97px) rotate(0.03deg);color:#b2b2b2">trial version</div>
<div class="t" id="y2000" style="left:14px;top:145px;font-size:10.8px;letter-spacing:-0.029px;transform:translate(0.60px,0.99px) rotate(0.03deg);">2000</div>
<div class="t" id="y1500" style="left:14px;top:343px;font-size:10.8px;letter-spacing:0.020px;transform:translate(0.80px,0.92px) rotate(0.03deg);">1500</div>
<div class="t" id="y1000" style="left:14px;top:542px;font-size:10.8px;letter-spacing:-0.009px;transform:translate(0.83px,0.20px) rotate(0.03deg);">1000</div>
<div class="t" id="y500" style="left:20px;top:740px;font-size:10.8px;letter-spacing:0.173px;transform:translate(0.38px,0.19px) rotate(0.03deg);">500</div>
<div class="t" id="ms" style="left:977px;top:139px;font-size:10.6px;letter-spacing:0.067px;transform:translate(0.95px,0.12px) rotate(0.03deg);">ms</div>
<div class="t" id="r40" style="left:996px;top:146px;font-size:10.8px;letter-spacing:-0.092px;transform:translate(0.85px,0.17px) rotate(0.03deg);">0.40</div>
<div class="t" id="r30" style="left:996px;top:344px;font-size:10.8px;letter-spacing:-0.104px;transform:translate(0.88px,0.11px) rotate(0.03deg);">0.30</div>
<div class="t" id="r20" style="left:996px;top:542px;font-size:10.8px;letter-spacing:-0.104px;transform:translate(0.99px,0.11px) rotate(0.03deg);">0.20</div>
<div class="t" id="r10" style="left:996px;top:740px;font-size:10.8px;letter-spacing:-0.157px;transform:translate(0.97px,0.42px) rotate(0.03deg);">0.10</div>
<div class="t" id="start" style="left:1059px;top:137px;font-size:11px;letter-spacing:-0.380px;transform:translate(0.50px,0.72px) rotate(0.03deg) scaleX(0.9856);">Start</div>
<div class="t" id="read" style="left:1046px;top:170px;font-size:11px;letter-spacing:-0.045px;transform:translate(0.33px,0.41px) rotate(0.03deg);">Read</div>
<div class="t" id="write" style="left:1046px;top:186px;font-size:11px;letter-spacing:-0.208px;transform:translate(0.93px,0.44px) rotate(0.03deg);">Write</div>
<div class="t" id="short" style="left:1046px;top:211px;font-size:11px;letter-spacing:-0.223px;transform:translate(0.38px,0.67px) rotate(0.03deg);">Short stroke</div>
<div class="t" id="v40" style="left:1033px;top:234px;font-size:11px;letter-spacing:0.087px;transform:translate(0.61px,0.53px) rotate(0.03deg);color:#6d6d6d">40</div>
<div class="t" id="gb" style="left:1102px;top:234px;font-size:11px;letter-spacing:0.524px;transform:translate(0.89px,0.70px) rotate(0.03deg);">gB</div>
<div class="t" id="trate" style="left:1047px;top:260px;font-size:11px;letter-spacing:-0.256px;transform:translate(0.22px,0.61px) rotate(0.03deg);">Transfer rate</div>
<div class="t" id="lmin" style="left:1030px;top:278px;font-size:11px;letter-spacing:-0.380px;transform:translate(0.76px,0.70px) rotate(0.03deg) scaleX(0.9644);">Minimum</div>
<div class="t" id="lmax" style="left:1030px;top:311px;font-size:11px;letter-spacing:-0.380px;transform:translate(0.74px,0.69px) rotate(0.03deg) scaleX(0.9625);">Maximum</div>
<div class="t" id="lavg" style="left:1030px;top:341px;font-size:11px;letter-spacing:-0.209px;transform:translate(0.96px,0.97px) rotate(0.03deg);">Average</div>
<div class="t" id="vmin" style="left:1042px;top:294px;font-size:12.6px;letter-spacing:-0.007px;transform:translate(0.14px,0.97px) rotate(0.03deg);color:#0cb0ff;font-weight:bold">1204.6 MB/s</div>
<div class="t" id="vmax" style="left:1042px;top:327px;font-size:12.6px;letter-spacing:-0.012px;transform:translate(0.14px,0.17px) rotate(0.03deg);color:#0cb0ff;font-weight:bold">1473.4 MB/s</div>
<div class="t" id="vavg" style="left:1042px;top:358px;font-size:12.6px;letter-spacing:0.011px;transform:translate(0.13px,0.50px) rotate(0.03deg);color:#0cb0ff;font-weight:bold">1377.3 MB/s</div>
<div class="t" id="acc" style="left:1046px;top:385px;font-size:11px;letter-spacing:-0.258px;transform:translate(0.96px,0.73px) rotate(0.03deg);">Access time</div>
<div class="t" id="vacc" style="left:1051px;top:402px;font-size:12.6px;letter-spacing:-0.274px;transform:translate(0.98px,0.20px) rotate(0.03deg);color:#ffff14;font-weight:bold">0.060 ms</div>
<div class="t" id="burst" style="left:1046px;top:419px;font-size:11px;letter-spacing:-0.209px;transform:translate(0.27px,0.61px) rotate(0.03deg);">Burst rate</div>
<div class="t" id="vburst" style="left:1044px;top:436px;font-size:12.6px;letter-spacing:0.129px;transform:translate(0.15px,0.21px) rotate(0.03deg);color:#fff;font-weight:bold">334.0 MB/s</div>
<div class="t" id="cpu" style="left:1030px;top:452px;font-size:11px;letter-spacing:-0.216px;transform:translate(0.42px,0.39px) rotate(0.03deg);">CPU usage</div>
<div class="t" id="vcpu" style="left:1064px;top:469px;font-size:12.6px;letter-spacing:-0.380px;transform:translate(0.83px,0.46px) rotate(0.03deg) scaleX(0.9853);color:#fff;font-weight:bold">1.3%</div>
<div class="t" id="npass" style="left:1030px;top:496px;font-size:11px;letter-spacing:-0.269px;transform:translate(0.35px,0.39px) rotate(0.03deg);">Number of passes</div>
<div class="t" id="v1" style="left:1033px;top:513px;font-size:11px;letter-spacing:0.000px;transform:translate(0.88px,0.19px) rotate(0.03deg);">1</div>
<div class="t" id="p11" style="left:1088px;top:538px;font-size:11px;letter-spacing:0.659px;transform:translate(0.80px,0.42px) rotate(0.03deg);">1/1</div>
<div class="t" id="x0" style="left:41px;top:950px;font-size:11.1px;letter-spacing:0.000px;transform:translate(0.48px,0.17px) rotate(0.03deg);">0</div>
<div class="t" id="x1" style="left:129px;top:950px;font-size:11.1px;letter-spacing:0.344px;transform:translate(0.26px,0.16px) rotate(0.03deg);">102</div>
<div class="t" id="x2" style="left:224px;top:950px;font-size:11.1px;letter-spacing:0.040px;transform:translate(0.66px,0.14px) rotate(0.03deg);">204</div>
<div class="t" id="x3" style="left:319px;top:950px;font-size:11.1px;letter-spacing:0.050px;transform:translate(0.78px,0.16px) rotate(0.03deg);">307</div>
<div class="t" id="x4" style="left:414px;top:950px;font-size:11.1px;letter-spacing:-0.155px;transform:translate(0.69px,0.17px) rotate(0.03deg);">409</div>
<div class="t" id="x5" style="left:509px;top:950px;font-size:11.1px;letter-spacing:0.119px;transform:translate(0.16px,0.16px) rotate(0.03deg);">512</div>
<div class="t" id="x6" style="left:603px;top:950px;font-size:11.1px;letter-spacing:0.041px;transform:translate(0.88px,0.14px) rotate(0.03deg);">614</div>
<div class="t" id="x7" style="left:698px;top:950px;font-size:11.1px;letter-spacing:0.022px;transform:translate(0.76px,0.15px) rotate(0.03deg);">716</div>
<div class="t" id="x8" style="left:793px;top:950px;font-size:11.1px;letter-spacing:-0.142px;transform:translate(0.78px,0.14px) rotate(0.03deg);">819</div>
<div class="t" id="x9" style="left:888px;top:950px;font-size:11.1px;letter-spacing:0.081px;transform:translate(0.65px,0.17px) rotate(0.03deg);">921</div>
<div class="t" id="x10" style="left:972px;top:950px;font-size:11.1px;letter-spacing:-0.097px;transform:translate(0.24px,0.16px) rotate(0.03deg);">1024gB</div>
</body></html>
